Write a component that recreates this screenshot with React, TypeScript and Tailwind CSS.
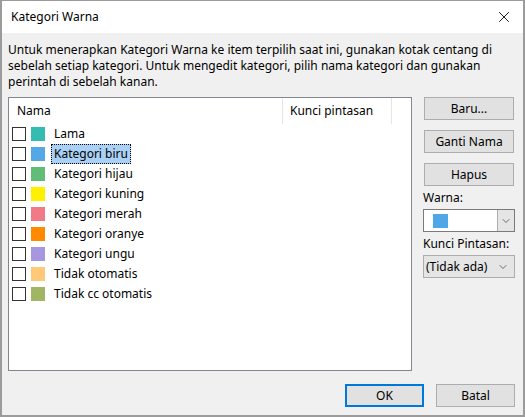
import { X, ChevronDown } from "lucide-react"

const categories = [
  { name: "Lama", color: "bg-[#33bcaf]" },
  { name: "Kategori biru", color: "bg-[#55a8e6]", selected: true },
  { name: "Kategori hijau", color: "bg-[#5fbd78]" },
  { name: "Kategori kuning", color: "bg-[#fff000]" },
  { name: "Kategori merah", color: "bg-[#f07a86]" },
  { name: "Kategori oranye", color: "bg-[#ff8a00]" },
  { name: "Kategori ungu", color: "bg-[#a797e0]" },
  { name: "Tidak otomatis", color: "bg-[#ffc978]" },
  { name: "Tidak cc otomatis", color: "bg-[#a2b562]" },
]

function DlgButton({ children, primary }: { children: React.ReactNode; primary?: boolean }) {
  return (
    <button
      className={
        "flex h-[23px] w-full items-center justify-center bg-[#e1e1e1] text-[12px] text-black " +
        (primary ? "border-2 border-[#0078d7]" : "border border-[#adadad]")
      }
    >
      {children}
    </button>
  )
}

export default function App() {
  return (
    <div
      className="flex h-[417px] w-[525px] flex-col border-x-2 border-t border-b-2 border-[#9b9b9b] bg-[#f0f0f0] text-black"
      style={{ fontFamily: '"Noto Sans", "Segoe UI", sans-serif' }}
    >
      {/* title bar */}
      <div className="flex h-[32px] shrink-0 items-center justify-between bg-white pl-[9px] pr-[10px]">
        <span className="text-[12px]">Kategori Warna</span>
        <X className="h-[18px] w-[18px] stroke-[1.2]" />
      </div>

      <p className="mt-[9px] px-[6px] text-[12px] leading-[16px]">
        Untuk menerapkan Kategori Warna ke item terpilih saat ini, gunakan kotak centang di sebelah setiap
        kategori. Untuk mengedit kategori, pilih nama kategori dan gunakan perintah di sebelah kanan.
      </p>

      <div className="mt-[7px] flex gap-[11px] pl-[6px]">
        {/* list */}
        <div className="h-[274px] w-[404px] border border-[#828790] bg-white">
          <div className="flex h-[26px] items-center text-[12px]">
            <div className="flex h-full w-[274px] items-center border-r border-[#e5e5e5] pl-[8px]">Nama</div>
            <div className="flex h-full w-[109px] items-center border-r border-[#e5e5e5] pl-[7px]">
              Kunci pintasan
            </div>
          </div>
          <div className="flex flex-col">
            {categories.map((c) => (
              <div key={c.name} className="flex h-[20px] items-center pl-[3px] text-[12px]">
                <span className="h-[14px] w-[14px] border border-[#333333] bg-white" />
                <span className={"ml-[5px] h-[14px] w-[14px] " + c.color} />
                <span
                  className={
                    "ml-[6px] px-[2px] leading-[18px] " +
                    (c.selected ? "border border-dotted border-black bg-[#a9d1f5]" : "border border-transparent")
                  }
                >
                  {c.name}
                </span>
              </div>
            ))}
          </div>
        </div>

        {/* right column */}
        <div className="flex w-[92px] flex-col">
          <div className="flex flex-col gap-[10px] px-[1px]">
            <DlgButton>Baru...</DlgButton>
            <DlgButton>Ganti Nama</DlgButton>
            <DlgButton>Hapus</DlgButton>
          </div>
          <span className="mt-[3px] text-[12px] leading-[18px]">Warna:</span>
          <div className="mt-[2px] flex h-[23px] border border-[#7a7a7a] bg-white">
            <div className="flex flex-1 items-center pl-[9px]">
              <span className="h-[14px] w-[15px] bg-[#4fa7e8]" />
            </div>
            <div className="flex w-[17px] items-center justify-center border-l border-[#adadad] bg-[#e5e5e5]">
              <ChevronDown className="h-[12px] w-[12px] stroke-[1.5] text-[#444]" />
            </div>
          </div>
          <span className="mt-[3px] text-[12px] leading-[18px]">Kunci Pintasan:</span>
          <div className="mt-[2px] flex h-[23px] items-center justify-between border border-[#adadad] bg-[#e5e5e5] pl-[2px] pr-[5px] text-[12px]">
            <span>(Tidak ada)</span>
            <ChevronDown className="h-[12px] w-[12px] stroke-[1.5] text-[#444]" />
          </div>
        </div>
      </div>

      {/* footer */}
      <div className="mt-[13px] flex justify-end gap-[12px] pr-[8px]">
        <div className="w-[79px]">
          <DlgButton primary>OK</DlgButton>
        </div>
        <div className="w-[79px]">
          <DlgButton>Batal</DlgButton>
        </div>
      </div>
    </div>
  )
}
